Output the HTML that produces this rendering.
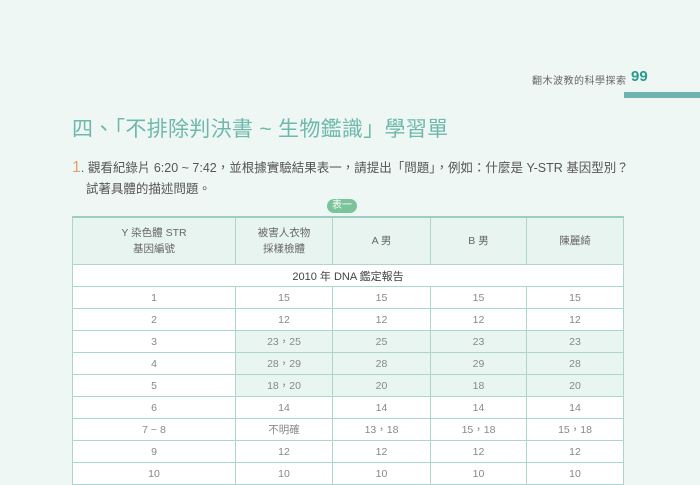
<!DOCTYPE html>
<html><head><meta charset="utf-8"><style>
body{margin:0;width:700px;height:485px;background:#eff7f4;position:relative;overflow:hidden;font-family:"Liberation Sans","Noto Sans CJK TC",sans-serif;}
.hdr{position:absolute;top:72px;left:532px;font-size:10px;color:#666;letter-spacing:0.5px;}
.pg{position:absolute;top:68px;left:631px;font-size:15px;font-weight:bold;color:#2a9a8f;}
.bar{position:absolute;top:92px;left:624px;width:76px;height:6px;background:#6fb3b1;}
.title{position:absolute;top:113px;left:72px;font-size:21px;color:#6fb8ac;letter-spacing:0.3px;}
.q{position:absolute;top:157px;left:72px;font-size:12.5px;color:#555;line-height:21px;}
.q b{color:#e6a070;font-weight:normal;font-size:16px;}
.tag{position:absolute;top:199px;left:327px;width:30px;height:14px;border-radius:7px;background:#7bc49b;color:#fff;font-size:10px;text-align:center;line-height:14px;}
table{position:absolute;top:216px;left:72px;border-collapse:collapse;width:551px;table-layout:fixed;}
td{border:1.5px solid #aad6cb;text-align:center;font-size:10.5px;color:#888;height:21px;padding:0;background:#fff;}
tr.h td{height:46px;background:#e8f4f0;color:#666;line-height:16px;border-top:2px solid #9ccfc2;}
tr.t td{color:#444;font-size:11px;}
tr.g td.c{background:#e9f5f1;}
</style></head><body>
<div class="hdr">翻木波教的科學探索</div><div class="pg">99</div><div class="bar"></div>
<div class="title">四、「不排除判決書 ~ 生物鑑識」學習單</div>
<div class="q"><b>1</b>. 觀看紀錄片 6:20 ~ 7:42，並根據實驗結果表一，請提出「問題」，例如：什麼是 Y-STR 基因型別？<br>&nbsp;&nbsp;&nbsp;&nbsp;試著具體的描述問題。</div>
<div class="tag">表一</div>
<table>
<col style="width:163px"><col style="width:97px"><col style="width:98px"><col style="width:96px"><col style="width:97px">
<tr class="h"><td>Y 染色體 STR<br>基因編號</td><td>被害人衣物<br>採樣檢體</td><td>A 男</td><td>B 男</td><td>陳麗綺</td></tr>
<tr class="t"><td colspan="5">2010 年 DNA 鑑定報告</td></tr>
<tr><td>1</td><td>15</td><td>15</td><td>15</td><td>15</td></tr>
<tr><td>2</td><td>12</td><td>12</td><td>12</td><td>12</td></tr>
<tr class="g"><td>3</td><td class="c">23，25</td><td class="c">25</td><td class="c">23</td><td class="c">23</td></tr>
<tr class="g"><td>4</td><td class="c">28，29</td><td class="c">28</td><td class="c">29</td><td class="c">28</td></tr>
<tr class="g"><td>5</td><td class="c">18，20</td><td class="c">20</td><td class="c">18</td><td class="c">20</td></tr>
<tr><td>6</td><td>14</td><td>14</td><td>14</td><td>14</td></tr>
<tr><td>7 ~ 8</td><td>不明確</td><td>13，18</td><td>15，18</td><td>15，18</td></tr>
<tr><td>9</td><td>12</td><td>12</td><td>12</td><td>12</td></tr>
<tr><td>10</td><td>10</td><td>10</td><td>10</td><td>10</td></tr>
</table>
</body></html>
